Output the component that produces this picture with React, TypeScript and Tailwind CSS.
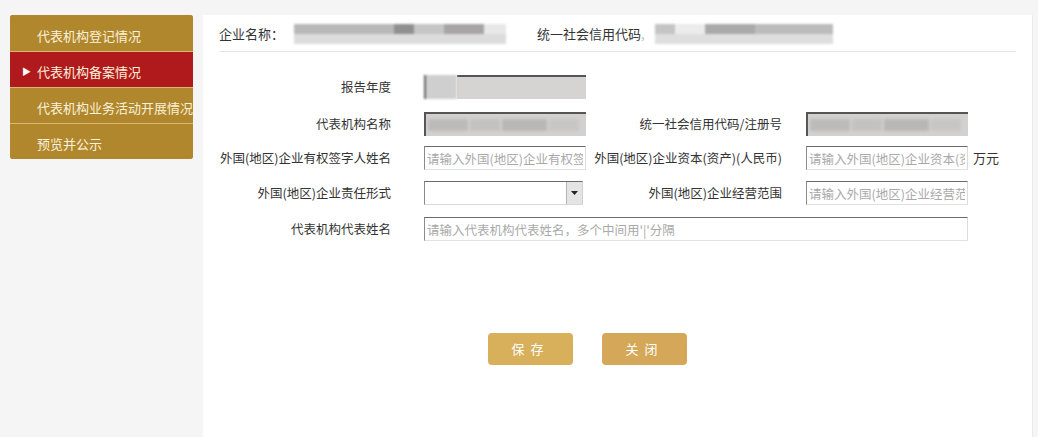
import React from "react";

const font = { fontFamily: '"Microsoft YaHei", "Noto Sans CJK SC", "Noto Sans", sans-serif' };

const menu = [
  { label: "代表机构登记情况", active: false },
  { label: "代表机构备案情况", active: true },
  { label: "代表机构业务活动开展情况", active: false },
  { label: "预览并公示", active: false },
];

// inset style box like an old IE text field
const boxCls =
  "h-[24px] border border-t-[#6b6b6b] border-l-[#8a8a8a] border-r-[#dcdcdc] border-b-[#e2e2e2] bg-white text-[12.5px] text-[#333] placeholder:text-[#a9a9a9] px-[2px] outline-none";

const Field = ({ placeholder, wide }: { placeholder: string; wide?: boolean }) => (
  <input readOnly placeholder={placeholder} className={`${boxCls} ${wide ? "w-[544px]" : "w-[162px]"}`} style={font} />
);

const BlurField = () => (
  <div className="h-[24px] w-[162px] border-l-2 border-t-2 border-l-[#555] border-t-[#555] bg-[#d3d1cf] flex items-center">
    <div className="h-[12px] w-full flex gap-[2px] px-[2px] blur-[1.5px]">
      <div className="w-[40px] bg-[#bdbbb9]" />
      <div className="w-[30px] bg-[#c4c2c0]" />
      <div className="w-[45px] bg-[#b9b7b5]" />
      <div className="w-[30px] bg-[#c8c6c4]" />
    </div>
  </div>
);

const Label = ({ text, w }: { text: string; w: string }) => (
  <div className={`${w} text-right text-[12.5px] text-[#333] whitespace-nowrap`}>{text}</div>
);

export default function App() {
  return (
    <div className="min-h-[437px] bg-[#f5f5f5] flex pt-[15px]" style={font}>
      {/* Sidebar */}
      <div className="ml-[10px] w-[183px] self-start">
        <div className="rounded-[3px] overflow-hidden bg-[#b0872d]">
          {menu.map((m, i) => (
            <div
              key={m.label}
              className={`h-[36px] flex items-center pl-[12px] pt-[5px] text-[13px] text-[#fbf1da] ${
                m.active ? "bg-[#b11a1c]" : "bg-[#b0872d]"
              } ${i > 0 ? "border-t border-[#d9b874]" : ""}`}
            >
              <span className="w-[14px] text-[9px] text-white">{m.active ? "▶" : ""}</span>
              <span className="ml-[1px]">{m.label}</span>
            </div>
          ))}
        </div>
      </div>

      {/* Main panel */}
      <div className="ml-[10px] mr-[5px] flex-1 bg-white border-r border-[#eaeaea] px-[16px] min-h-[422px]">
        {/* Header */}
        <div className="h-[37px] pt-[2px] flex items-center border-b border-[#e6e6e6] text-[13px] text-[#333]">
          <span>企业名称：</span>
          <div className="ml-[10px] w-[212px] h-[20px] flex flex-col blur-[1px]">
            <div className="flex-1 flex">
              <div className="w-[100px] bg-[#b8b8b8]" />
              <div className="w-[20px] bg-[#909090]" />
              <div className="w-[30px] bg-[#c6c6c6]" />
              <div className="w-[40px] bg-[#a8a4a6]" />
              <div className="w-[22px] bg-[#e8e8e8]" />
            </div>
            <div className="flex-1 bg-[#dcdcdc]" />
          </div>
          <span className="ml-[31px]">统一社会信用代码</span>
          <span className="text-[#bbb]">,</span>
          <div className="ml-[10px] w-[178px] h-[20px] flex flex-col blur-[1px]">
            <div className="flex-1 flex">
              <div className="w-[20px] bg-[#c4c4c4]" />
              <div className="w-[30px] bg-[#ececec]" />
              <div className="w-[50px] bg-[#aaaaaa]" />
              <div className="w-[78px] bg-[#bcbcbc]" />
            </div>
            <div className="flex-1 bg-[#dedede]" />
          </div>
        </div>

        {/* Form */}
        <div className="pt-[23px] flex flex-col">
          <div className="flex items-center">
            <Label text="报告年度" w="w-[172px]" />
            <div className="ml-[33px]">
              <div className="h-[24px] w-[162px] flex">
                <div className="w-[33px] h-full bg-[#cfcfcf] blur-[1px] border-l-2 border-[#666]" />
                <div className="flex-1 h-full bg-[#d6d4d2] border-t-2 border-[#555]" />
              </div>
            </div>
          </div>

          <div className="mt-[13px] flex items-center">
            <Label text="代表机构名称" w="w-[172px]" />
            <div className="ml-[33px]">
              <BlurField />
            </div>
            <Label text="统一社会信用代码/注册号" w="w-[196px]" />
            <div className="ml-[24px]">
              <BlurField />
            </div>
          </div>

          <div className="mt-[10px] flex items-center">
            <Label text="外国(地区)企业有权签字人姓名" w="w-[172px]" />
            <div className="ml-[33px] flex">
              <Field placeholder="请输入外国(地区)企业有权签字人姓名" />
            </div>
            <Label text="外国(地区)企业资本(资产)(人民币)" w="w-[196px]" />
            <div className="ml-[24px] flex items-center">
              <Field placeholder="请输入外国(地区)企业资本(资产)" />
              <span className="ml-[5px] text-[13px] text-[#333]">万元</span>
            </div>
          </div>

          <div className="mt-[11px] flex items-center">
            <Label text="外国(地区)企业责任形式" w="w-[172px]" />
            <div className="ml-[33px] w-[162px]">
              <div className="h-[24px] w-[159px] border border-t-[#6b6b6b] border-l-[#8a8a8a] border-r-[#cfcfcf] border-b-[#d8d8d8] bg-white flex justify-end">
                <div className="w-[16px] h-full bg-[#e4e4e4] border-l border-[#b5b5b5] flex items-center justify-center">
                  <svg width="7" height="4" viewBox="0 0 7 4">
                    <path d="M0 0 L7 0 L3.5 4 Z" fill="#222" />
                  </svg>
                </div>
              </div>
            </div>
            <Label text="外国(地区)企业经营范围" w="w-[196px]" />
            <div className="ml-[24px] flex">
              <Field placeholder="请输入外国(地区)企业经营范围" />
            </div>
          </div>

          <div className="mt-[12px] flex items-center">
            <Label text="代表机构代表姓名" w="w-[172px]" />
            <div className="ml-[33px] flex">
              <Field placeholder="请输入代表机构代表姓名，多个中间用'|'分隔" wide />
            </div>
          </div>
        </div>

        {/* Buttons */}
        <div className="mt-[92px] flex pl-[269px] gap-[29px]">
          <button className="w-[85px] h-[32px] rounded-[4px] bg-[#d8b05c] text-white text-[13px] tracking-[6px]">保存</button>
          <button className="w-[85px] h-[32px] rounded-[4px] bg-[#d5a758] text-white text-[13px] tracking-[6px]">关闭</button>
        </div>
      </div>
    </div>
  );
}
